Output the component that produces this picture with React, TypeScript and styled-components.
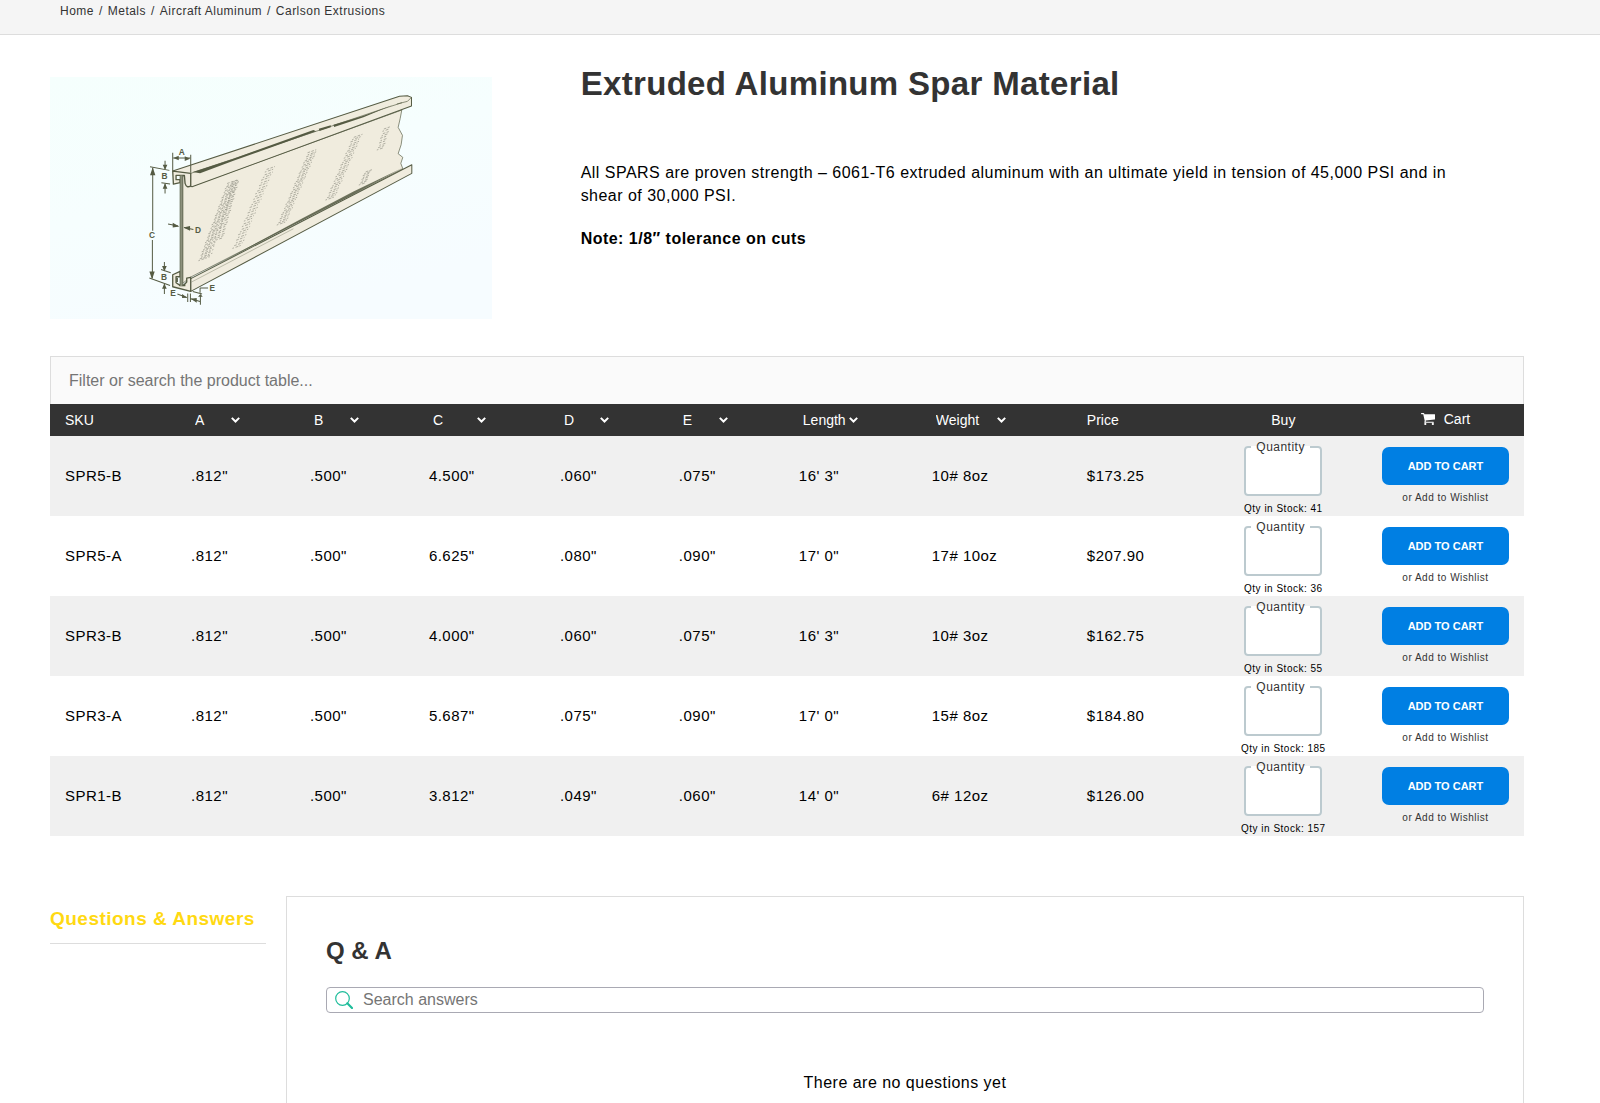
import React from "react";
import styled, { createGlobalStyle } from "styled-components";

const GlobalStyle = createGlobalStyle`
  *, *::before, *::after { box-sizing: border-box; }
  body {
    margin: 0;
    background: #fff;
    color: #000;
    font-family: "Liberation Sans", Arial, Helvetica, sans-serif;
    font-size: 16px;
    letter-spacing: 0.03em;
  }
`;

const TopBar = styled.nav`
  height: 35px;
  padding: 3px 60px;
  background: #f5f5f5;
  border-bottom: 1px solid #ddd;
  font-size: 12px;
  line-height: 16px;
  letter-spacing: 0.04em;
`;

const Crumbs = styled.ol`
  display: flex;
  margin: 0;
  padding: 0;
  list-style: none;
`;

const Crumb = styled.li`
  & + &::before {
    content: "/";
    padding: 0 5px;
    color: #333;
  }
`;

const CrumbLink = styled.a`
  color: #333;
  text-decoration: none;
`;

const Page = styled.main`
  padding: 0 76px 0 50px;
`;

const Product = styled.section`
  display: grid;
  grid-template-columns: 30% 60%;
  column-gap: 6%;
  padding: 27px 0 37px;
`;

const Picture = styled.svg`
  display: block;
  width: 100%;
  height: auto;
  margin-top: 15px;
`;

const Title = styled.h1`
  margin: 0 0 55px;
  color: #333;
  font-size: 33px;
  line-height: 44px;
  letter-spacing: 0.01em;
`;

const Copy = styled.p`
  margin: 0 0 20px;
  font-size: 16px;
  line-height: 23px;
`;

const FilterBox = styled.input`
  display: block;
  width: 100%;
  height: 48px;
  padding: 0 18px;
  background: #fafafa;
  border: 1px solid #ddd;
  border-bottom: 0;
  border-radius: 0;
  font-family: inherit;
  font-size: 16px;
  letter-spacing: normal;
  &::placeholder { color: #757575; opacity: 1; }
`;

const Table = styled.table`
  width: 100%;
  table-layout: fixed;
  border-collapse: collapse;
  font-size: 15px;
`;

const Col = styled.col<{ $share: number }>`
  width: ${(p) => p.$share}%;
`;

const HeadRow = styled.tr`
  height: 32px;
  background: #333;
  color: #fff;
`;

const Th = styled.th<{ $center?: boolean }>`
  padding: 0 0 1px ${(p) => (p.$center ? 0 : 15)}px;
  font-size: 14px;
  font-weight: 400;
  letter-spacing: normal;
  text-align: ${(p) => (p.$center ? "center" : "left")};
`;

const CartHead = styled.span`
  display: inline-flex;
  align-items: center;
  gap: 9px;
`;

const SelectWrap = styled.span`
  display: inline-grid;
  align-items: center;
  & > * { grid-area: 1 / 1; }
  & > svg { justify-self: end; margin-right: 4px; pointer-events: none; }
`;

const Select = styled.select`
  appearance: none;
  padding: 0 16px 0 4px;
  border: 0;
  background: transparent;
  color: #fff;
  font: inherit;
  & option { color: #000; }
`;

const Row = styled.tr`
  height: 80px;
  &:nth-child(odd) { background: #f0f0f0; }
`;

const Td = styled.td<{ $center?: boolean }>`
  padding: ${(p) => (p.$center ? "0" : "0 0 2px 15px")};
  text-align: ${(p) => (p.$center ? "center" : "left")};
`;

const BuyCell = styled.div`
  display: flex;
  flex-direction: column;
  align-items: center;
  gap: 7px;
  padding-top: 3px;
`;

const QuantityBox = styled.fieldset`
  width: 78px;
  height: 56px;
  margin: 0;
  padding: 0 5px;
  border: 2px solid #bccacf;
  border-radius: 4px;
  background: #fff;
  text-align: left;
`;

const QuantityLegend = styled.legend`
  padding: 0 5px;
  color: #333;
  font-size: 12px;
  line-height: 14px;
`;

const QuantityInput = styled.input`
  display: block;
  width: 100%;
  height: 36px;
  padding: 0;
  border: 0;
  outline: 0;
  background: transparent;
  font: inherit;
`;

const Stock = styled.span`
  font-size: 10px;
  line-height: 12px;
  letter-spacing: 0.05em;
  white-space: nowrap;
`;

const CartCell = styled.div`
  display: flex;
  flex-direction: column;
  gap: 7px;
  padding: 0 15px 1px;
`;

const AddButton = styled.button`
  height: 38px;
  border: 0;
  border-radius: 7px;
  background: #007fe3;
  color: #fff;
  font-family: inherit;
  font-size: 11px;
  font-weight: 700;
  letter-spacing: normal;
  text-transform: uppercase;
  cursor: pointer;
`;

const WishLink = styled.a`
  color: #333;
  font-size: 10px;
  line-height: 12px;
  letter-spacing: 0.05em;
  text-align: center;
  text-decoration: none;
`;

const Questions = styled.section`
  display: grid;
  grid-template-columns: 216px 1fr;
  column-gap: 20px;
  align-items: start;
  padding-top: 60px;
`;

const TabLink = styled.a`
  display: block;
  padding: 12px 0 13px;
  border-bottom: 1px solid #ddd;
  color: #ffd912;
  font-size: 19px;
  font-weight: 700;
  line-height: 22px;
  text-decoration: none;
  white-space: nowrap;
`;

const Panel = styled.div`
  padding: 38px 39px 40px;
  border: 1px solid #ddd;
`;

const PanelTitle = styled.h2`
  margin: 0 0 20px;
  color: #333;
  font-size: 24px;
  line-height: 32px;
  letter-spacing: normal;
`;

const SearchBox = styled.label`
  display: flex;
  align-items: center;
  gap: 10px;
  height: 26px;
  padding: 0 8px;
  border: 1px solid #a9a9b3;
  border-radius: 4px;
`;

const SearchInput = styled.input`
  flex: 1;
  padding: 0;
  border: 0;
  outline: 0;
  background: transparent;
  font-family: inherit;
  font-size: 16px;
  letter-spacing: normal;
  &::placeholder { color: #757575; opacity: 1; }
`;

const Empty = styled.p`
  margin: 60px 0 20px;
  line-height: 20px;
  text-align: center;
`;

const crumbs = ["Home", "Metals", "Aircraft Aluminum", "Carlson Extrusions"];
const shares = [8.55, 8.07, 8.07, 8.89, 8.07, 8.14, 9.02, 10.52, 8.68, 11.34, 10.65];
const filters = ["A", "B", "C", "D", "E", "Length", "Weight"];

const products = [
  { sku: "SPR5-B", specs: ['.812"', '.500"', '4.500"', '.060"', '.075"', "16' 3\"", "10# 8oz"], price: "$173.25", stock: 41 },
  { sku: "SPR5-A", specs: ['.812"', '.500"', '6.625"', '.080"', '.090"', "17' 0\"", "17# 10oz"], price: "$207.90", stock: 36 },
  { sku: "SPR3-B", specs: ['.812"', '.500"', '4.000"', '.060"', '.075"', "16' 3\"", "10# 3oz"], price: "$162.75", stock: 55 },
  { sku: "SPR3-A", specs: ['.812"', '.500"', '5.687"', '.075"', '.090"', "17' 0\"", "15# 8oz"], price: "$184.80", stock: 185 },
  { sku: "SPR1-B", specs: ['.812"', '.500"', '3.812"', '.049"', '.060"', "14' 0\"", "6# 12oz"], price: "$126.00", stock: 157 },
];

const Chevron = () => (
  <svg width="9" height="6" viewBox="0 0 9 6" fill="none" stroke="#fff" strokeWidth="2" aria-hidden="true">
    <path d="M0.8 0.9 4.5 4.5 8.2 0.9" />
  </svg>
);

const CartIcon = () => (
  <svg width="14" height="13" viewBox="0 128 1664 1536" fill="#fff" aria-hidden="true">
    <path d="M640 1536q0 52-38 90t-90 38-90-38-38-90 38-90 90-38 90 38 38 90zm896 0q0 52-38 90t-90 38-90-38-38-90 38-90 90-38 90 38 38 90zm128-1088v512q0 24-16.500 42.500t-40.500 21.500l-1044 122q13 60 13 70 0 16-24 64h920q26 0 45 19t19 45-19 45-45 19h-1024q-26 0-45-19t-19-45q0-11 8-31.500t16-36 21.500-40 15.500-29.500l-177-823h-204q-26 0-45-19t-19-45 19-45 45-19h256q16 0 28.500 6.500t19.500 15.500 13 24.500 8 26 5.500 29.500 4.500 26h1201q26 0 45 19t19 45z" />
  </svg>
);

const SearchIcon = () => (
  <svg width="18" height="18" viewBox="0 0 18 18" fill="none" stroke="#1fbd9b" aria-hidden="true">
    <circle cx="7.500" cy="7.500" r="6.800" strokeWidth="1.200" />
    <path d="M12.300 12.300 17 17" strokeWidth="2.200" strokeLinecap="round" />
  </svg>
);

// Shading bands on the web: lower end, upper end, band width and line density.
const bands = [
  { x: 595, y: 782, tx: 682, ty: 545, w: 34, n: 44 },
  { x: 648, y: 720, tx: 698, ty: 540, w: 18, n: 26 },
  { x: 697, y: 745, tx: 800, ty: 500, w: 25, n: 30 },
  { x: 830, y: 675, tx: 925, ty: 452, w: 26, n: 36 },
  { x: 976, y: 600, tx: 1060, ty: 405, w: 26, n: 28 },
  { x: 1076, y: 555, tx: 1095, ty: 510, w: 20, n: 8 },
  { x: 1130, y: 450, tx: 1150, ty: 380, w: 18, n: 10 },
];

const INK = "#555b43";
const CREAM = "#f0ecde";

const SparDrawing = () => (
  <Picture viewBox="150 231 1326 726" role="img" aria-label="Extruded spar with dimensions A to E">
    <defs>
      <linearGradient id="backdrop" x1="0" y1="0" x2="0.5" y2="1">
        <stop offset="0" stopColor="#f5fffd" />
        <stop offset="0.5" stopColor="#f6fefe" />
        <stop offset="1" stopColor="#f6fcff" />
      </linearGradient>
    </defs>
    <rect x="150" y="231" width="1326" height="726" fill="url(#backdrop)" />
    <g stroke={INK} strokeWidth="3" strokeLinejoin="round" fill={CREAM}>
      <path d="M548 524 572 560 1205 330 1200 356 1194 382 1207 406 1203 434 1194 461 1208 472 1202 490 1208 506 570 832 548 850Z" strokeWidth="2" />
      <path d="M518 513 1198 289 1222 287 1234 292V318L576 560 564 556 560 524Z" />
      <path d="M568 838 1235 494V520L572 874Z" />
      <path d="M518 513 572 520V557Q560 566 555 550L553 526H528V539H540V548L520 552Z" strokeWidth="4" />
      <path d="M518 824 540 814V830L528 830V848L540 856H550L560 846V834L572 832V874L518 860Z" strokeWidth="4" />
      <path d="M531 846V834M538 856H556" fill="none" strokeWidth="5" />
    </g>
    <rect x="540" y="526" width="8" height="332" fill="#8d917c" />
    <path d="M540 526V856M548 526V858" stroke={INK} strokeWidth="2" />
    <g fill={INK}>
      <path d="M578 516 700 476 940 390 948 394 700 482 600 520Z" />
      <path d="M956 386 992 376 992 382 958 393Z" />
      <path d="M1000 374 1090 347 1180 314 1090 352 1002 381Z" />
      <path d="M572 834 700 766 900 658 1060 574 1208 503 1060 582 880 674 720 758Z" opacity="0.850" />
    </g>
    <g stroke={INK} fill="none" strokeWidth="2">
      <path d="M572 520 1150 326 1206 308 1222 304 1234 292M1206 308 1190 312" />
      <path d="M574 846 880 686" opacity="0.500" />
    </g>
    <g stroke="#8f8f84" strokeWidth="2" fill="none">
      {bands.map((b) =>
        Array.from({ length: b.n }, (_, i) => {
          const t = i / b.n;
          const x = b.x + (b.tx - b.x) * t + ((i * 7) % 5);
          const y = b.y + (b.ty - b.y) * t;
          return (
            <path
              key={`${b.x}-${i}`}
              d={`M${x} ${y}l${b.w} ${-b.w * 0.35}`}
              strokeDasharray={i % 2 ? "8 4" : "5 5 9 3"}
            />
          );
        })
      )}
    </g>
    <g stroke={INK} strokeWidth="3" fill="none">
      <path d="M518 458V512M572 464V518M520 474H570" />
      <path d="M450 500 508 511M484 548 510 552M495 482V506M495 552V580" />
      <path d="M458 504V692M457 720V834" />
      <path d="M448 834 510 856M483 808 512 818M493 786V808M493 852V882" />
      <path d="M504 672 534 678M552 682 580 688" />
      <path d="M532 882 560 892M563 880V906M571 880V906M572 896 600 904M601 886V914M578 874 606 882M600 864V878M600 864H624" />
    </g>
    <g fill={INK}>
      <path d="M520 474 536 467V481ZM570 476 554 469V483Z" />
      <path d="M495 510 488 494H502ZM495 550 488 566H502Z" />
      <path d="M458 502 450 526H466ZM456 838 448 814H464Z" />
      <path d="M493 814 486 798H500ZM493 850 486 866H500Z" />
      <path d="M538 679 518 668V682ZM550 682 570 678V692Z" />
      <path d="M562 893 546 882V894ZM572 896 590 894V908ZM601 882 594 890H608Z" />
    </g>
    <g fill={INK} fontFamily="Liberation Sans, Arial, sans-serif" fontWeight="700" fontSize="25" textAnchor="middle">
      <text x="545" y="466">A</text>
      <text x="494" y="536">B</text>
      <text x="456" y="715">C</text>
      <text x="594" y="698">D</text>
      <text x="492" y="840">B</text>
      <text x="519" y="889">E</text>
      <text x="637" y="874">E</text>
    </g>
  </Picture>
);

export default function App() {
  return (
    <>
      <GlobalStyle />
      <TopBar aria-label="Breadcrumb">
        <Crumbs>
          {crumbs.map((c) => (
            <Crumb key={c}>
              <CrumbLink href="#">{c}</CrumbLink>
            </Crumb>
          ))}
        </Crumbs>
      </TopBar>
      <Page>
        <Product>
          <SparDrawing />
          <div>
            <Title>Extruded Aluminum Spar Material</Title>
            <Copy>
              All SPARS are proven strength – 6061-T6 extruded aluminum with an ultimate yield in tension of 45,000 PSI
              and in shear of 30,000 PSI.
            </Copy>
            <Copy>
              <strong>Note: 1/8″ tolerance on cuts</strong>
            </Copy>
          </div>
        </Product>

        <FilterBox
          type="text"
          aria-label="Filter or search the product table"
          placeholder="Filter or search the product table..."
        />
        <Table>
          <colgroup>
            {shares.map((s, i) => (
              <Col key={i} $share={s} />
            ))}
          </colgroup>
          <thead>
            <HeadRow>
              <Th>SKU</Th>
              {filters.map((f, i) => (
                <Th key={f}>
                  <SelectWrap>
                    <Select aria-label={`Filter by ${f}`}>
                      <option>{f}</option>
                      {Array.from(new Set(products.map((p) => p.specs[i]))).map((v) => (
                        <option key={v}>{v}</option>
                      ))}
                    </Select>
                    <Chevron />
                  </SelectWrap>
                </Th>
              ))}
              <Th>Price</Th>
              <Th $center>Buy</Th>
              <Th $center>
                <CartHead>
                  <CartIcon />
                  Cart
                </CartHead>
              </Th>
            </HeadRow>
          </thead>
          <tbody>
            {products.map((p) => (
              <Row key={p.sku}>
                <Td>{p.sku}</Td>
                {p.specs.map((s, i) => (
                  <Td key={i}>{s}</Td>
                ))}
                <Td>{p.price}</Td>
                <Td $center>
                  <BuyCell>
                    <QuantityBox>
                      <QuantityLegend>
                        <label htmlFor={`qty-${p.sku}`}>Quantity</label>
                      </QuantityLegend>
                      <QuantityInput id={`qty-${p.sku}`} type="text" inputMode="numeric" />
                    </QuantityBox>
                    <Stock>Qty in Stock: {p.stock}</Stock>
                  </BuyCell>
                </Td>
                <Td $center>
                  <CartCell>
                    <AddButton type="button">Add to cart</AddButton>
                    <WishLink href="#">or Add to Wishlist</WishLink>
                  </CartCell>
                </Td>
              </Row>
            ))}
          </tbody>
        </Table>

        <Questions>
          <TabLink href="#qa">Questions &amp; Answers</TabLink>
          <Panel id="qa">
            <PanelTitle>Q &amp; A</PanelTitle>
            <SearchBox>
              <SearchIcon />
              <SearchInput type="text" aria-label="Search answers" placeholder="Search answers" />
            </SearchBox>
            <Empty>There are no questions yet</Empty>
          </Panel>
        </Questions>
      </Page>
    </>
  );
}
